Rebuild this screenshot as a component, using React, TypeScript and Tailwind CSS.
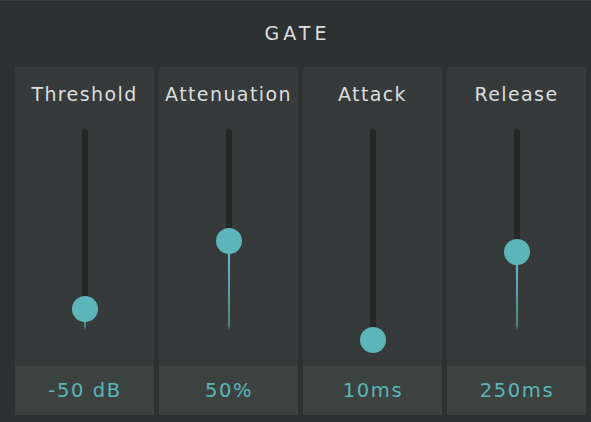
import React from 'react'

type Param = {
  label: string
  value: string
  knob: number
}

const TRACK_H = 201

const params: Param[] = [
  { label: 'Threshold', value: '-50 dB', knob: 180 },
  { label: 'Attenuation', value: '50%', knob: 112 },
  { label: 'Attack', value: '10ms', knob: 211 },
  { label: 'Release', value: '250ms', knob: 123 },
]

const Slider = ({ knob }: { knob: number }) => {
  const tail = Math.max(TRACK_H - knob, 0)
  return (
    <div className="relative mx-auto w-[26px]" style={{ height: TRACK_H }}>
      <div
        className="absolute left-[10px] top-0 w-[6px] rounded-t-full bg-[#242726]"
        style={{ height: knob }}
      />
      {tail > 0 && (
        <svg
          className="absolute left-[11px]"
          style={{ top: knob, height: tail }}
          width="4"
          viewBox={`0 0 4 ${tail}`}
          preserveAspectRatio="none"
        >
          <polygon points={`0.8,0 3.2,0 2.6,${tail - 4} 2,${tail} 1.4,${tail - 4}`} fill="#5bb5b9" />
        </svg>
      )}
      <div
        className="absolute left-0 h-[26px] w-[26px] rounded-full bg-[#5bb5b9]"
        style={{ top: knob - 13 }}
      />
    </div>
  )
}

const App = () => {
  return (
    <main
      className="flex h-[422px] w-[591px] flex-col border-t border-[#3d4140] bg-[#2d3131] text-[#dcdfde]"
      style={{ fontFamily: '"DejaVu Sans", sans-serif' }}
    >
      <div className="flex h-[66px] items-center justify-center pb-[2px]">
        <h1 className="pl-[4px] text-[19px] leading-none tracking-[4px] text-[#dcdfde]">GATE</h1>
      </div>
      <div className="grid grid-cols-4 gap-[5px] pl-[15px] pr-[5px]">
        {params.map((p) => (
          <div key={p.label} className="flex h-[348px] flex-col bg-[#363a3a]">
            <div className="pt-[14px] text-center text-[19px] leading-[26px] tracking-[1.4px]">
              {p.label}
            </div>
            <div className="mt-[22px]">
              <Slider knob={p.knob} />
            </div>
            <div className="mt-auto flex h-[49px] items-center justify-center bg-[#3c4240] pl-[1px] text-[19.5px] tracking-[1.6px] text-[#5bb5b9]">
              {p.value}
            </div>
          </div>
        ))}
      </div>
    </main>
  )
}

export default App
